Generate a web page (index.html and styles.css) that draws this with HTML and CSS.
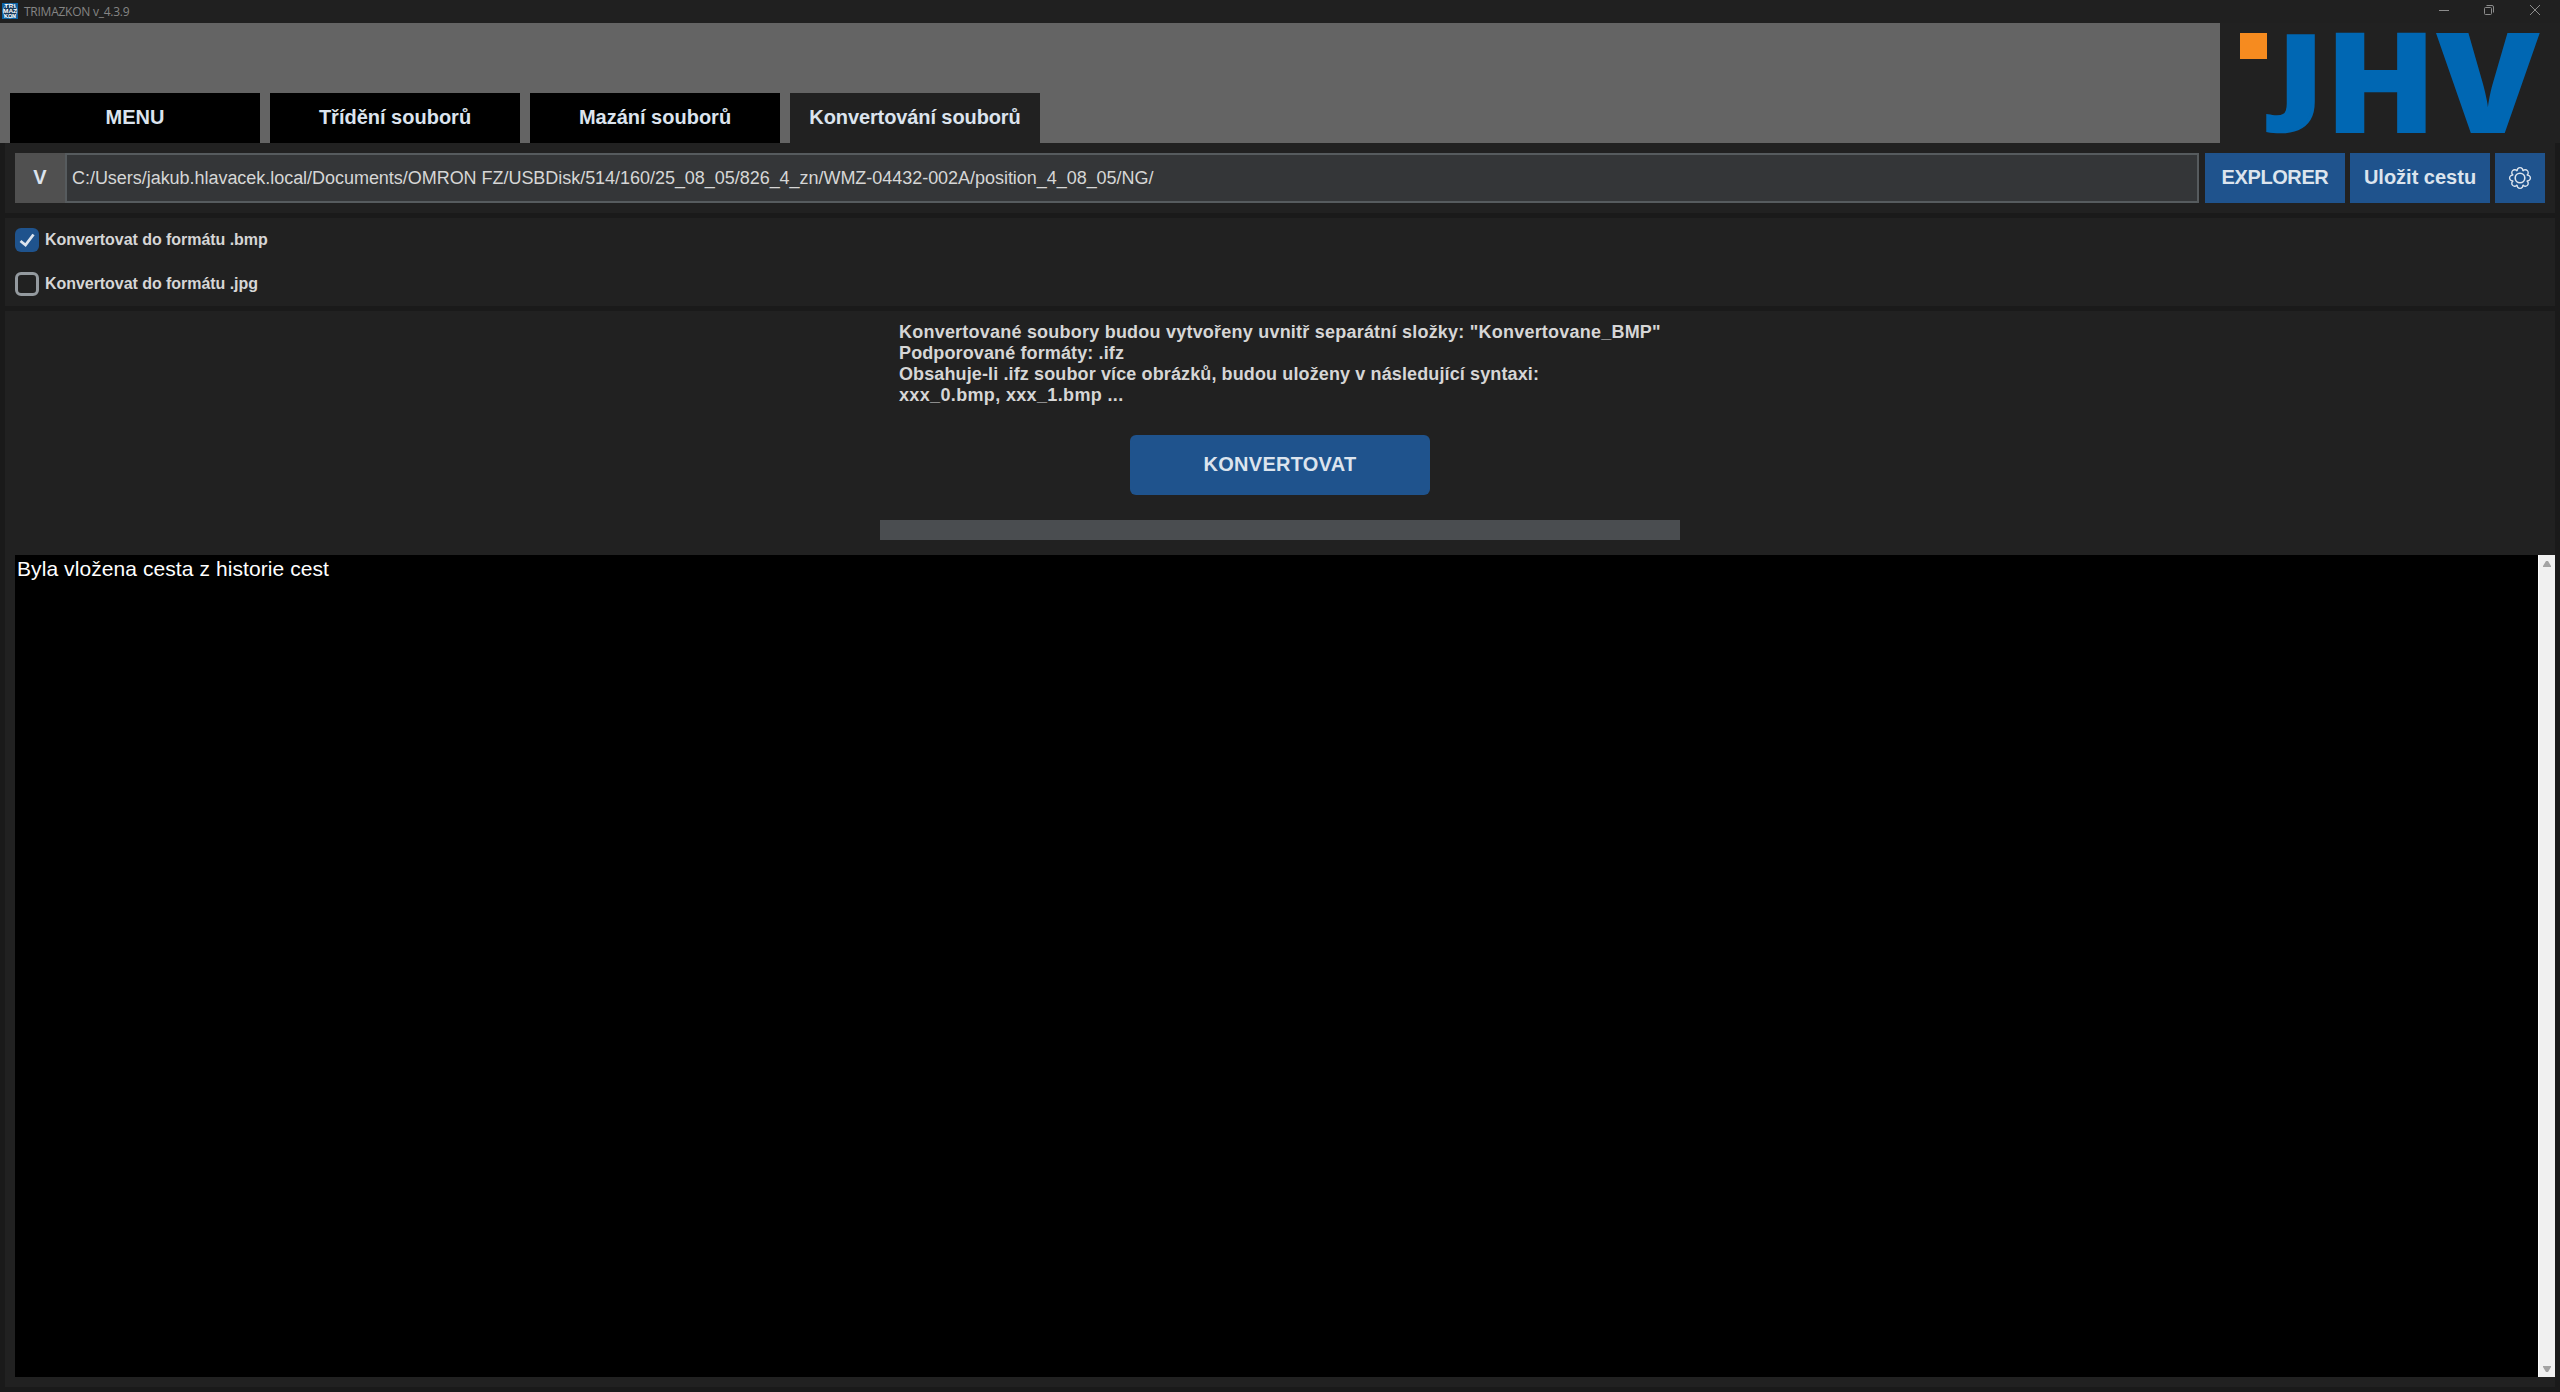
FILE: index.html
```html
<!DOCTYPE html>
<html lang="cs">
<head>
<meta charset="utf-8">
<title>TRIMAZKON v_4.3.9</title>
<link rel="stylesheet" href="styles.css">
</head>
<body>
<div class="window">
  <header class="titlebar">
    <svg class="app-icon" width="16" height="16" viewBox="0 0 16 16">
      <rect width="16" height="16" fill="#0d62a3"/>
      <circle cx="8" cy="8" r="6.9" fill="#173a5c" stroke="#7fb0d6" stroke-width="1"/>
      <g fill="#fff" font-family="Liberation Sans, sans-serif" font-weight="bold" font-size="6" text-anchor="middle">
        <text x="8" y="5.4" textLength="11">TRI</text>
        <text x="8" y="10.1" textLength="14" lengthAdjust="spacingAndGlyphs">MAZ</text>
        <text x="8" y="14.9" textLength="12" lengthAdjust="spacingAndGlyphs">KON</text>
      </g>
    </svg>
    <span class="app-title">TRIMAZKON v_4.3.9</span>
    <svg class="window-controls" width="104" height="12" viewBox="0 0 104 12" fill="none" stroke="#8c8c8c">
      <path d="M0 6.5H10"/>
      <rect x="45.5" y="3.5" width="7" height="7" rx="1"/>
      <path d="M47.500 1.500H53q1.500 0 1.500 1.500V8.500"/>
      <path d="M91 1L101 11M101 1L91 11"/>
    </svg>
  </header>

  <div class="top">
    <nav class="tabs">
      <button class="tab">MENU</button>
      <button class="tab">Třídění souborů</button>
      <button class="tab">Mazání souborů</button>
      <button class="tab active">Konvertování souborů</button>
    </nav>
    <svg class="logo" width="340" height="120" viewBox="0 0 340 120">
      <rect x="20" y="10" width="27" height="26" fill="#f68b1f"/>
      <g class="logo-text">
        <text class="heavy" transform="translate(58 86) scale(1.280 1.030)">J</text>
        <text transform="translate(104.500 110) scale(1.467 1.400)">H</text>
        <text transform="translate(216 110) scale(1.495 1.400)">V</text>
      </g>
    </svg>
  </div>

  <main class="content">
    <section class="panel path-row">
      <button class="history">V</button>
      <div class="path">C:/Users/jakub.hlavacek.local/Documents/OMRON FZ/USBDisk/514/160/25_08_05/826_4_zn/WMZ-04432-002A/position_4_08_05/NG/</div>
      <button class="btn explorer">EXPLORER</button>
      <button class="btn save">Uložit cestu</button>
      <button class="btn settings" aria-label="Nastavení">
        <svg width="24" height="24" viewBox="0 0 24 24" fill="none" stroke="#dce4ee" stroke-width="1.400">
          <circle cx="12" cy="12" r="4.800" stroke-width="1.600"/>
          <path d="M9.200 5.250A2.900 2.900 0 1 1 14.800 5.250A2.900 2.900 0 1 1 18.750 9.200A2.900 2.900 0 1 1 18.750 14.800A2.900 2.900 0 1 1 14.800 18.750A2.900 2.900 0 1 1 9.200 18.750A2.900 2.900 0 1 1 5.250 14.800A2.900 2.900 0 1 1 5.250 9.200A2.900 2.900 0 1 1 9.200 5.250Z"/>
        </svg>
      </button>
    </section>

    <section class="panel formats">
      <label class="check">
        <span class="box checked"><svg width="24" height="24" viewBox="0 0 24 24" fill="none" stroke="#dce4ee" stroke-width="2.800"><path d="M5.500 13L10.500 17L18.500 6.500"/></svg></span>
        Konvertovat do formátu .bmp
      </label>
      <label class="check">
        <span class="box"></span>
        Konvertovat do formátu .jpg
      </label>
    </section>

    <section class="panel convert">
      <div class="info">
        <p class="wide">Konvertované soubory budou vytvořeny uvnitř separátní složky: "Konvertovane_BMP"</p>
        <p>Podporované formáty: .ifz</p>
        <p>Obsahuje-li .ifz soubor více obrázků, budou uloženy v následující syntaxi:</p>
        <p class="example">xxx_0.bmp, xxx_1.bmp ...</p>
      </div>
      <button class="btn run">KONVERTOVAT</button>
      <div class="progress"></div>
      <div class="console">
        <div class="output">Byla vložena cesta z historie cest</div>
        <div class="scrollbar">
          <svg width="8" height="6" viewBox="0 0 8 6"><path d="M0 6V5L3 0H5L8 5V6Z" fill="#a3a3a3"/></svg>
          <svg width="8" height="6" viewBox="0 0 8 6"><path d="M0 0V1L3 6H5L8 1V0Z" fill="#a3a3a3"/></svg>
        </div>
      </div>
    </section>
  </main>
</div>
</body>
</html>
```
FILE: styles.css
```css
* { box-sizing: border-box; }

body {
  margin: 0;
  background: #1a1a1a;
  color: #dce4ee;
  font-family: "Liberation Sans", Arial, sans-serif;
}

button {
  border: 0;
  margin: 0;
  padding: 0 0 2px;
  color: #dce4ee;
  font: bold 20px "Liberation Sans", Arial, sans-serif;
}

.window {
  display: flex;
  flex-direction: column;
  width: 2560px;
  height: 1392px;
  overflow: hidden;
}

.titlebar {
  display: flex;
  flex: none;
  height: 23px;
  background: #202020;
}

.app-icon { margin: 3px 0 0 2px; }

.app-title {
  margin-left: 6px;
  color: #858585;
  font: 12px/23px "Open Sans", sans-serif;
  letter-spacing: -0.25px;
}

.window-controls { margin: 4px 17px 0 auto; }

.top {
  display: flex;
  flex: none;
  height: 120px;
  background: #212121;
}

.tabs {
  display: flex;
  align-items: flex-end;
  gap: 10px;
  width: 2220px;
  padding-left: 10px;
  background: #646464;
}

.tab {
  width: 250px;
  height: 50px;
  background: #000;
}

.tab.active {
  background: #212121;
  letter-spacing: -0.1px;
}

.logo { overflow: visible; }

.logo-text {
  fill: #0067b3;
  font: 800 100px "Open Sans", sans-serif;
}

.logo-text .heavy {
  stroke: #0067b3;
  stroke-width: 2.5px;
}

.content {
  display: flex;
  flex: 1;
  flex-direction: column;
  gap: 5px;
  padding: 0 5px 5px;
}

.panel { background: #212121; }

.path-row {
  display: flex;
  height: 70px;
  padding: 10px;
}

.history {
  width: 50px;
  background: #505050;
}

.path {
  width: 2134px;
  height: 50px;
  margin-right: 6px;
  padding-left: 5px;
  border: 2px solid #565b5e;
  background: #343638;
  font-size: 18px;
  line-height: 46px;
  letter-spacing: -0.035px;
  white-space: nowrap;
  color: #d6d6d6;
}

.btn { background: #1f538d; }

.explorer {
  width: 140px;
  letter-spacing: -0.4px;
}

.save {
  width: 140px;
  margin: 0 5px;
}

.settings {
  display: flex;
  align-items: center;
  justify-content: center;
  width: 50px;
  padding: 0;
}

.formats {
  display: flex;
  flex-direction: column;
  gap: 20px;
  height: 88px;
  padding: 10px;
}

.check {
  display: flex;
  gap: 6px;
  color: #d6d6d6;
  font-weight: bold;
  font-size: 16px;
  line-height: 23px;
  letter-spacing: -0.05px;
}

.box {
  width: 24px;
  height: 24px;
  border: 3px solid #949a9f;
  border-radius: 6px;
}

.box.checked {
  border: 0;
  background: #1f538d;
}

.box svg { display: block; }

.convert {
  display: flex;
  flex: 1;
  flex-direction: column;
  align-items: center;
  padding: 11px 0 10px 10px;
}

.info {
  align-self: flex-start;
  height: 84px;
  margin: 0 0 29px 884px;
  color: #d6d6d6;
  font-weight: bold;
  font-size: 18px;
  line-height: 21px;
  letter-spacing: 0.12px;
  white-space: nowrap;
}

.info p { margin: 0; }

.info .wide { letter-spacing: 0.22px; }

.info .example { letter-spacing: 0.35px; }

.run {
  width: 300px;
  height: 60px;
  margin-right: 10px;
  border-radius: 6px;
  letter-spacing: 0.25px;
}

.progress {
  width: 800px;
  height: 20px;
  margin: 25px 10px 15px 0;
  background: #4a4d50;
}

.console {
  display: flex;
  flex: 1;
  align-self: stretch;
}

.output {
  flex: 1;
  padding: 2px;
  background: #000;
  color: #fff;
  font-size: 21px;
  line-height: 24px;
  letter-spacing: 0.08px;
}

.scrollbar {
  display: flex;
  flex-direction: column;
  align-items: center;
  justify-content: space-between;
  width: 17px;
  padding: 6px 0 5px;
  border-left: 1px solid #fff;
  background: #f0f0f0;
}
```
